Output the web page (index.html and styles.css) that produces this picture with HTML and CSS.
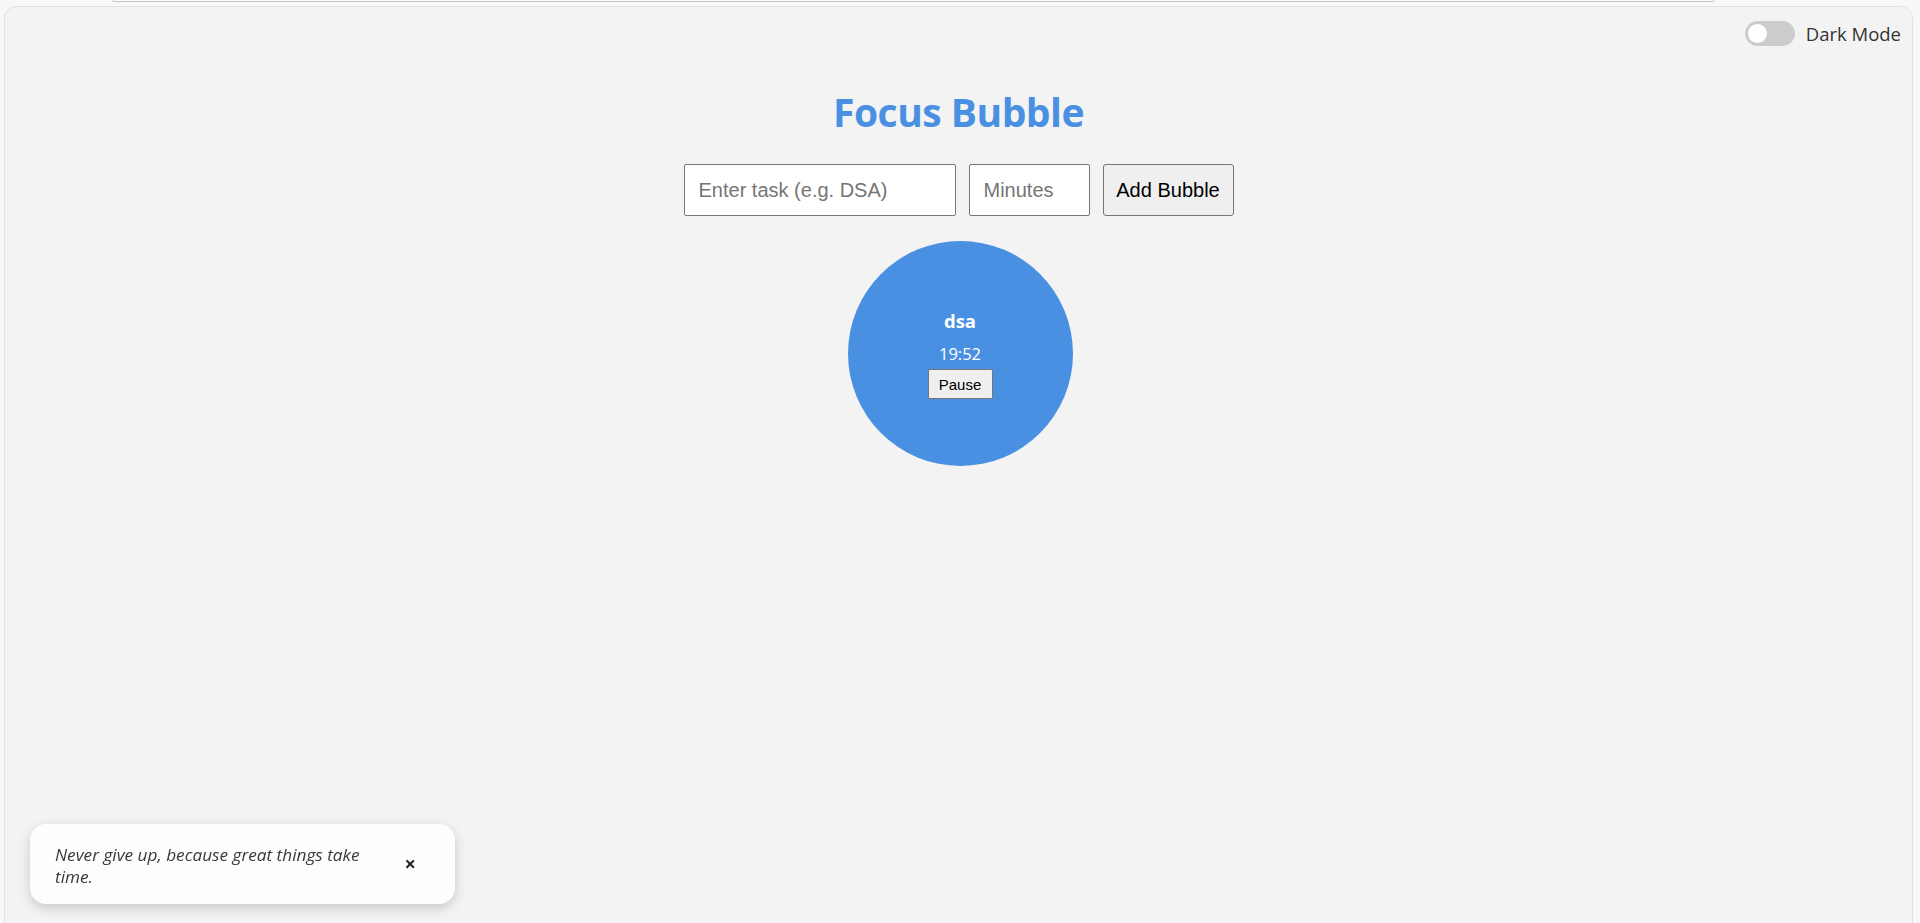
FILE: index.html
```html
<!DOCTYPE html>
<html lang="en">
<head>
<meta charset="utf-8">
<title>Focus Bubble</title>
<link rel="stylesheet" href="styles.css">
</head>
<body>
<div class="topstrip"></div>
<main class="app">
  <div class="toggle-row">
    <span class="switch"><span class="knob"></span></span>
    <span class="toggle-label">Dark Mode</span>
  </div>
  <h1 class="title">Focus Bubble</h1>
  <div class="form-row">
    <input class="field field-task" type="text" placeholder="Enter task (e.g. DSA)">
    <input class="field field-min" type="number" placeholder="Minutes">
    <button class="add-btn">Add Bubble</button>
  </div>
  <div class="bubbles">
    <div class="bubble">
      <div class="bubble-name">dsa</div>
      <div class="bubble-time">19:52</div>
      <button class="pause-btn">Pause</button>
    </div>
  </div>
</main>
<div class="toast">
  <p class="quote">Never give up, because great things take time.</p>
  <span class="close">×</span>
</div>
</body>
</html>
```
FILE: styles.css
```css
html, body {
  margin: 0;
  padding: 0;
  overflow: hidden;
}
body {
  background: #f8f8f8;
  font-family: "Open Sans", "Noto Sans", sans-serif;
  height: 923px;
}
.topstrip {
  margin-left: 112px;
  width: 1600px;
  height: 1px;
  background: #fbfbfb;
  border: 1px solid #c4c4c4;
  border-top: none;
  border-radius: 0 0 8px 8px;
}
.app {
  margin: 4px 7px 0 4px;
  height: 1000px;
  background: #f3f3f3;
  border: 1px solid #e2e2e2;
  border-radius: 12px;
  box-sizing: border-box;
  padding: 14px 11px 0;
}
.toggle-row {
  display: flex;
  justify-content: flex-end;
  align-items: center;
  gap: 11px;
  height: 25px;
}
.switch {
  width: 50px;
  height: 25px;
  border-radius: 13px;
  background: #cccccc;
  display: flex;
  align-items: center;
  padding-left: 3px;
  box-sizing: border-box;
}
.knob {
  width: 19px;
  height: 19px;
  border-radius: 50%;
  background: #ffffff;
}
.toggle-label {
  font-size: 18.5px;
  color: #333;
}
.title {
  margin: 46px 0 0;
  text-align: center;
  font-size: 39px;
  line-height: 40px;
  font-weight: 700;
  color: #4a90e2;
  letter-spacing: -0.5px;
}
.form-row {
  display: flex;
  justify-content: center;
  gap: 13px;
  margin-top: 32px;
}
.field {
  height: 52px;
  box-sizing: border-box;
  border: 1px solid #767676;
  border-radius: 2px;
  background: #fff;
  padding: 0 14px;
  font-family: "Liberation Sans", Arial, sans-serif;
  font-size: 20px;
  color: #000;
  outline: none;
}
.field::placeholder { color: #757575; }
.field-task { width: 272px; }
.field-min { width: 121px; -moz-appearance: textfield; }
.field-min::-webkit-inner-spin-button,
.field-min::-webkit-outer-spin-button { -webkit-appearance: none; margin: 0; }
.add-btn {
  width: 131px;
  height: 52px;
  box-sizing: border-box;
  border: 1px solid #767676;
  border-radius: 3px;
  background: #efefef;
  font-family: "Liberation Sans", Arial, sans-serif;
  font-size: 20px;
  color: #000;
  padding: 0;
}
.bubbles {
  display: flex;
  justify-content: center;
  margin-top: 25px;
  padding-left: 3px;
}
.bubble {
  width: 225px;
  height: 225px;
  border-radius: 50%;
  background: #4a90e2;
  color: #fff;
  display: flex;
  flex-direction: column;
  align-items: center;
  justify-content: center;
  padding-top: 1px;
  box-sizing: border-box;
}
.bubble-name {
  font-weight: 700;
  font-size: 18.5px;
  line-height: 23px;
}
.bubble-time {
  margin-top: 11px;
  font-size: 16.5px;
  line-height: 21px;
}
.pause-btn {
  margin-top: 5px;
  width: 65px;
  height: 30px;
  box-sizing: border-box;
  border: 1px solid #767676;
  border-radius: 2px;
  background: #efefef;
  font-family: "Liberation Sans", Arial, sans-serif;
  font-size: 15px;
  color: #000;
  padding: 0;
}
.toast {
  position: fixed;
  left: 30px;
  top: 824px;
  width: 425px;
  height: 80px;
  box-sizing: border-box;
  background: #fdfdfd;
  border-radius: 16px;
  box-shadow: 0 4px 12px rgba(0,0,0,0.18);
  display: flex;
  align-items: center;
  justify-content: space-between;
  padding: 0 39px 0 25px;
}
.quote {
  margin: 4px 0 0;
  width: 320px;
  font-style: italic;
  font-size: 17.2px;
  line-height: 22px;
  color: #3a3a3a;
}
.close {
  font-size: 20px;
  font-weight: 700;
  color: #222;
  line-height: 20px;
}
```
